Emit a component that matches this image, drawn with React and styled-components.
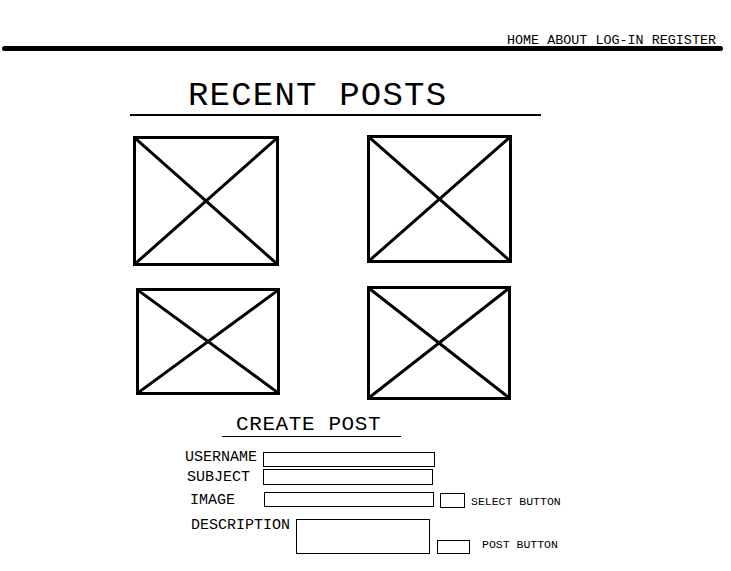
import React from 'react';
import styled, { createGlobalStyle } from 'styled-components';

const GlobalStyle = createGlobalStyle`
  html, body {
    margin: 0;
    padding: 0;
    background: #fff;
  }
  body {
    font-family: "Courier New", "Liberation Mono", monospace;
    color: #000;
  }
`;

const Page = styled.div`
  width: 731px;
  height: 571px;
  overflow: hidden;
  background: #fff;
`;

const Nav = styled.nav`
  padding: 35px 15px 0 0;
  text-align: right;
  font-size: 13.4px;
  line-height: 11px;
  white-space: pre;
`;

const NavLink = styled.a`
  color: #000;
  text-decoration: none;
`;

const Rule = styled.div`
  height: 5px;
  margin: 0 8px 0 2px;
  background: #000;
  border-radius: 3px;
`;

const RecentTitle = styled.h1`
  box-sizing: border-box;
  width: 411px;
  margin: 27px 0 0 130px;
  padding-left: 58px;
  font-size: 34px;
  letter-spacing: 1.2px;
  line-height: 36px;
  font-weight: normal;
  border-bottom: 2px solid #000;
`;

const PostGrid = styled.div`
  display: grid;
  grid-template-columns: 146px 146px;
  column-gap: 88px;
  row-gap: 20px;
  align-items: start;
  margin: 19px 0 0 133px;
`;

const Placeholder = styled.div`
  box-sizing: border-box;
  width: ${({ $w }) => $w}px;
  height: ${({ $h }) => $h}px;
  margin: ${({ $top = 0 }) => $top}px 0 0 ${({ $left = 0 }) => $left}px;
  border: 3px solid #000;

  svg {
    display: block;
    width: 100%;
    height: 100%;
  }
`;

const CreateTitle = styled.h2`
  box-sizing: border-box;
  width: 179px;
  margin: 14px 0 0 222px;
  padding-left: 14px;
  font-size: 21px;
  letter-spacing: 0.6px;
  line-height: 22px;
  font-weight: normal;
  border-bottom: 1px solid #000;
`;

const Form = styled.form`
  margin-top: 15px;
`;

const FieldRow = styled.div`
  display: flex;
  align-items: flex-start;
  margin-top: ${({ $gap }) => $gap}px;
  padding-left: ${({ $indent }) => $indent}px;
`;

const Label = styled.label`
  flex-shrink: 0;
  width: ${({ $w }) => $w}px;
  margin-top: ${({ $top }) => $top}px;
  font-size: 15px;
  line-height: 12px;
`;

const TextField = styled.input`
  box-sizing: border-box;
  width: ${({ $w }) => $w}px;
  height: ${({ $h }) => $h}px;
  margin: 0;
  padding: 0;
  border: 1px solid #000;
  background: #fff;
  outline: none;
`;

const TextArea = styled.textarea`
  box-sizing: border-box;
  width: 134px;
  height: 35px;
  margin: 0;
  padding: 0;
  border: 1px solid #000;
  background: #fff;
  resize: none;
  outline: none;
`;

const SmallButton = styled.button`
  box-sizing: border-box;
  flex-shrink: 0;
  width: ${({ $w }) => $w}px;
  height: ${({ $h }) => $h}px;
  margin: ${({ $top }) => $top}px 0 0 ${({ $left }) => $left}px;
  padding: 0;
  border: 1px solid #000;
  background: #fff;
`;

const ButtonCaption = styled.span`
  margin: ${({ $top }) => $top}px 0 0 ${({ $left }) => $left}px;
  font-size: 11.5px;
  line-height: 12px;
  white-space: nowrap;
`;

const CrossBox = ({ w, h, top, left }) => (
  <Placeholder $w={w} $h={h} $top={top} $left={left}>
    <svg viewBox="0 0 100 100" preserveAspectRatio="none">
      <line x1="0" y1="0" x2="100" y2="100" stroke="#000" strokeWidth="3" vectorEffect="non-scaling-stroke" />
      <line x1="100" y1="0" x2="0" y2="100" stroke="#000" strokeWidth="3" vectorEffect="non-scaling-stroke" />
    </svg>
  </Placeholder>
);

const App = () => (
  <Page>
    <GlobalStyle />
    <header>
      <Nav>
        <NavLink href="#">HOME</NavLink> <NavLink href="#">ABOUT</NavLink>{' '}
        <NavLink href="#">LOG-IN</NavLink> <NavLink href="#">REGISTER</NavLink>
      </Nav>
      <Rule />
    </header>

    <RecentTitle>RECENT POSTS</RecentTitle>
    <PostGrid>
      <CrossBox w={146} h={130} top={1} />
      <CrossBox w={145} h={128} />
      <CrossBox w={144} h={107} top={2} left={3} />
      <CrossBox w={144} h={114} />
    </PostGrid>

    <CreateTitle>CREATE POST</CreateTitle>
    <Form onSubmit={e => e.preventDefault()}>
      <FieldRow $gap={0} $indent={185}>
        <Label $w={78} $top={0}>USERNAME</Label>
        <TextField $w={172} $h={15} />
      </FieldRow>
      <FieldRow $gap={2} $indent={187}>
        <Label $w={76} $top={3}>SUBJECT</Label>
        <TextField $w={170} $h={16} />
      </FieldRow>
      <FieldRow $gap={7} $indent={190}>
        <Label $w={74} $top={3}>IMAGE</Label>
        <TextField $w={170} $h={15} />
        <SmallButton type="button" $w={25} $h={15} $top={1} $left={6} />
        <ButtonCaption $top={4} $left={6}>SELECT BUTTON</ButtonCaption>
      </FieldRow>
      <FieldRow $gap={11} $indent={191}>
        <Label $w={105} $top={1}>DESCRIPTION</Label>
        <TextArea />
        <SmallButton type="submit" $w={33} $h={14} $top={21} $left={7} />
        <ButtonCaption $top={20} $left={12}>POST BUTTON</ButtonCaption>
      </FieldRow>
    </Form>
  </Page>
);

export default App;
